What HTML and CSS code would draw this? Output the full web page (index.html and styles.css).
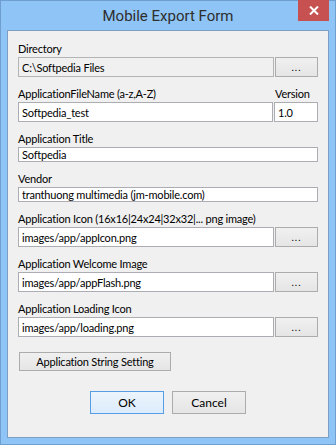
FILE: index.html
```html
<!DOCTYPE html>
<html lang="en">
<head>
  <meta charset="UTF-8">
  <title>Mobile Export Form</title>
  <link rel="stylesheet" href="styles.css">
</head>
<body>

<div class="window">
  <header class="titlebar">
    <h1>Mobile Export Form</h1>
    <button class="closeBtn" title="Close">
      <svg width="10" height="9" viewBox="0 0 10 9"><path d="M1 0.5 L9 8.5 M9 0.5 L1 8.5" stroke="#fff" stroke-width="2"/></svg>
    </button>
  </header>

  <main class="client">

    <div class="field">
      <label>Directory</label>
      <div class="row">
        <input class="txt readonly" value="C:\Softpedia Files" readonly>
        <button class="btn browse">...</button>
      </div>
    </div>

    <div class="field">
      <div class="row labels">
        <label class="grow">ApplicationFileName (a-z,A-Z)</label>
        <label class="side">Version</label>
      </div>
      <div class="row">
        <input class="txt" value="Softpedia_test">
        <input class="txt side" value="1.0">
      </div>
    </div>

    <div class="field">
      <label>Application Title</label>
      <input class="txt full" value="Softpedia">
    </div>

    <div class="field">
      <label>Vendor</label>
      <input class="txt full" value="tranthuong multimedia (jm-mobile.com)">
    </div>

    <div class="field">
      <label>Application Icon (16x16|24x24|32x32|... png image)</label>
      <div class="row">
        <input class="txt" value="images/app/appIcon.png">
        <button class="btn browse">...</button>
      </div>
    </div>

    <div class="field">
      <label>Application Welcome Image</label>
      <div class="row">
        <input class="txt" value="images/app/appFlash.png">
        <button class="btn browse">...</button>
      </div>
    </div>

    <div class="field">
      <label>Application Loading Icon</label>
      <div class="row">
        <input class="txt" value="images/app/loading.png">
        <button class="btn browse">...</button>
      </div>
    </div>

    <button class="btn strings">Application String Setting</button>

    <div class="actions">
      <button class="btn ok">OK</button>
      <button class="btn">Cancel</button>
    </div>

  </main>
</div>

</body>
</html>
```

FILE: styles.css
```css
body {
  margin: 0;
  font-family: 'Lato', 'Roboto', sans-serif;
  font-size: 11px;
  letter-spacing: -0.2px;
  color: #000;
}

.window {
  width: 336px;
  height: 445px;
  box-sizing: border-box;
  border: 1px solid #6f9fcf;
  background-color: #8ec5f6;
  padding: 0 6px 6px 6px;
  display: flex;
  flex-direction: column;
  position: relative;
}

.titlebar {
  height: 29px;
  display: flex;
  align-items: center;
  justify-content: center;
}

.titlebar h1 {
  margin: 0;
  font-family: 'Roboto', sans-serif;
  font-size: 15px;
  font-weight: normal;
  letter-spacing: 0;
  color: #2e2e2e;
  padding-top: 1px;
}

.closeBtn {
  position: absolute;
  top: -1px;
  right: 6px;
  width: 31px;
  height: 21px;
  border: none;
  background: #c75050;
  padding: 0;
  display: flex;
  align-items: center;
  justify-content: center;
}

.client {
  flex: 1;
  border: 1px solid #7c9fc3;
  background-color: #f0f0f0;
  padding: 11px 10px 0 10px;
  display: flex;
  flex-direction: column;
}

.field {
  display: flex;
  flex-direction: column;
  margin-bottom: 10px;
}

.field label {
  height: 15px;
  line-height: 14px;
  white-space: nowrap;
}

.row {
  display: flex;
  gap: 1px;
}

.labels .grow {
  flex: 1;
}

.labels .side {
  width: 43px;
}

.txt {
  flex: 1;
  min-width: 0;
  height: 20px;
  box-sizing: border-box;
  margin: 0;
  border: 1px solid #abadb3;
  background: #fff;
  font-family: inherit;
  font-size: 11px;
  letter-spacing: -0.2px;
  padding: 0 3px;
  color: #000;
}

.txt.readonly {
  background: #f0f0f0;
  border-color: #b4b4b4;
}

.txt.full {
  width: 100%;
}

.txt.side {
  flex: 0 0 44px;
}

.btn {
  font-family: inherit;
  font-size: 11px;
  letter-spacing: -0.2px;
  color: #000;
  margin: 0;
  border: 1px solid #acacac;
  background: linear-gradient(#f0f0f0, #e5e5e5);
  padding: 0;
  box-sizing: border-box;
}

.browse {
  flex: 0 0 43px;
  height: 20px;
  font-size: 10px;
  letter-spacing: 1px;
  line-height: 12px;
}

.strings {
  align-self: flex-start;
  width: 152px;
  height: 19px;
  margin: 5px 0 0 1px;
}

.actions {
  display: flex;
  justify-content: center;
  gap: 8px;
  margin-top: 20px;
}

.actions .btn {
  width: 74px;
  height: 23px;
  font-size: 12px;
  letter-spacing: 0;
}

.actions .ok {
  border-color: #569de5;
  background: linear-gradient(#ecf4fc, #dcecfc);
}
```
